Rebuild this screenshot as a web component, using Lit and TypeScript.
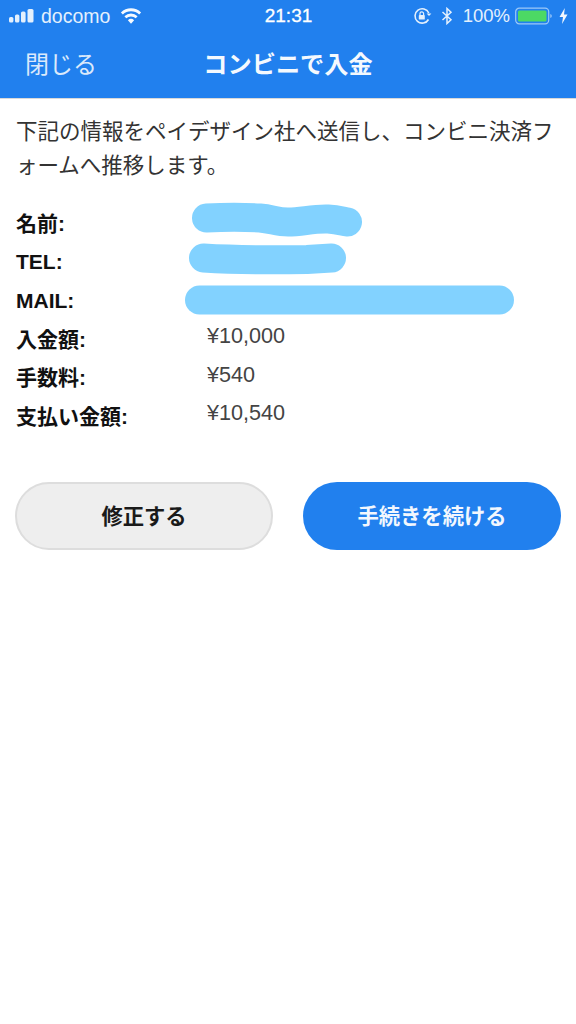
import { LitElement, html, css, svg } from "lit";
import { customElement } from "lit/decorators.js";

@customElement("app-root")
export class AppRoot extends LitElement {
  static styles = css`
    :host { display: block; width: 576px; height: 1024px; background: #fff; font-family: "Liberation Sans", "Noto Sans CJK JP", sans-serif; overflow: hidden; }
    .head { background: #2180ee; height: 98px; color: #fff; border-bottom: 1px solid #d9d9d9; box-sizing: content-box; }
    .status { height: 32px; display: grid; grid-template-columns: 1fr auto 1fr; align-items: center; padding: 0 8px 0 9px; font-size: 18.5px; color: #e4f0fd; }
    .sl, .sr { display: flex; align-items: center; }
    .sl { gap: 6px; }
    .sr { justify-content: flex-end; }
    .carrier { font-size: 19.5px; }
    .wifi { margin-left: 4px; }
    .bt { margin-left: 9px; }
    .pct { margin-left: 10px; }
    .batt { margin-left: 5px; }
    .bolt { margin-left: 6px; }
    .time { font-size: 19px; color: #fff; letter-spacing: 0; -webkit-text-stroke: .3px #fff; }
    .nav { height: 60px; display: grid; grid-template-columns: 1fr auto 1fr; align-items: center; padding: 0 25px 8px 25px; }
    .close { font-size: 24px; font-family: "Noto Sans CJK JP", sans-serif; color: #dbe9fb; letter-spacing: 0; font-weight: 400; }
    .title { font-size: 24.2px; font-weight: 700; font-family: "Noto Sans CJK JP", sans-serif; color: #f4f9fe; }
    .intro { margin: 0; padding: 14px 16px 0 16px; font-size: 21.5px; line-height: 33.5px; color: #333; font-family: "Noto Sans CJK JP", sans-serif; line-break: anywhere; }
    .rows { display: grid; grid-template-columns: 191px 1fr; grid-auto-rows: 38.6px; padding: 23px 0 0 16px; }
    .label { font-weight: 700; font-size: 21px; line-height: 24px; color: #111; align-self: center; padding-top: 3px; }
    .value { position: relative; font-size: 21.6px; color: #444; align-self: center; }
    .amount { padding-bottom: 4px; }
    .mask { position: absolute; left: -20px; top: -20px; overflow: visible; }
    .btns { display: grid; grid-template-columns: 1fr 1fr; gap: 30px; padding: 47px 15px 0 15px; }
    .btn { height: 68px; border-radius: 34px; box-sizing: border-box; display: flex; align-items: center; justify-content: center; padding-bottom: 3px; font-size: 21.3px; font-weight: 700; font-family: "Noto Sans CJK JP", sans-serif; }
    .ghost { background: #eeeeee; border: 2px solid #dddddd; color: #1a1a1a; }
    .main { background: #2180ee; color: #f2f7fe; }
  `;

  mask(d: string, w: number) {
    return html`<svg class="mask" width="${w}" height="60" viewBox="0 0 ${w} 60" aria-hidden="true">${svg`<path d="${d}" fill="none" stroke="#82d2ff" stroke-width="29" stroke-linecap="round" stroke-linejoin="round"/>`}</svg>`;
  }

  render() {
    const masks: [string, unknown][] = [
      ["名前:", this.mask("M19.5 16 C40 15 55 15 73 16 C85 17 90 20 101 20 C115 20 125 16.5 141 17 C150 17.5 155 19 160.5 20", 200)],
      ["TEL:", this.mask("M16.5 17 C50 19 90 19 120 18.4 L144.5 17", 170)],
      ["MAIL:", this.mask("M12.5 21 L312.5 21", 340)],
    ];
    const amounts = [
      ["入金額:", "¥10,000"],
      ["手数料:", "¥540"],
      ["支払い金額:", "¥10,540"],
    ];
    return html`
      <div class="head">
        <div class="status">
          <div class="sl">
            <svg width="26" height="16" viewBox="0 0 26 16" fill="#e4f0fd"><rect x="0" y="9" width="4.4" height="5.5" rx="1.6"/><rect x="6" y="6.5" width="4.4" height="8" rx="1.6"/><rect x="12" y="3.5" width="4.6" height="11" rx="1.6"/><rect x="18.5" y="1" width="6" height="13.5" rx="1.6"/></svg>
            <span class="carrier">docomo</span>
            <svg class="wifi" width="22" height="17" viewBox="0 0 24 18" fill="#f6faff"><path d="M12 17 L8.6 13 A5 5 0 0 1 15.4 13 Z"/><path d="M6.8 11 L4.8 8.7 A10.5 10.5 0 0 1 19.2 8.7 L17.2 11 A7.5 7.5 0 0 0 6.8 11 Z"/><path d="M3.1 6.9 L1 4.5 A16 16 0 0 1 23 4.5 L20.9 6.9 A13 13 0 0 0 3.1 6.9 Z"/></svg>
          </div>
          <div class="time">21:31</div>
          <div class="sr">
            <svg width="19" height="18" viewBox="0 0 19 18" fill="none" stroke="#e4f0fd" stroke-width="1.6"><path d="M15.5 12.5 A7.2 7.2 0 1 1 15.8 6"/><path d="M16 9 l-2.4 -2.6 h4.8 z" fill="#e4f0fd" stroke="none"/><rect x="5.8" y="8" width="6" height="4.6" rx=".7" fill="#e4f0fd" stroke="none"/><path d="M7 8 V6.6 a1.8 1.8 0 0 1 3.6 0 V8" stroke-width="1.2"/></svg>
            <svg class="bt" width="12" height="18" viewBox="0 0 11 18" fill="none" stroke="#e4f0fd" stroke-width="1.5"><path d="M1 5 L9.5 12.8 L5.5 16.5 V1.5 L9.5 5.2 L1 13"/></svg>
            <span class="pct">100%</span>
            <svg class="batt" width="38" height="18" viewBox="0 0 38 18"><rect x=".7" y="1.2" width="33" height="15.6" rx="3.6" fill="none" stroke="#9cc8f8" stroke-width="1.2"/><rect x="3" y="3.4" width="28.5" height="11.2" rx="1.6" fill="#4cd964"/><path d="M35.5 7 a2.4 2.4 0 0 1 0 4 z" fill="#cfe3fb"/></svg>
            <svg class="bolt" width="9" height="16" viewBox="0 0 9 16" fill="#f1f7fe"><path d="M5.8 0 L.5 9 H4 L3 16 L8.5 6.5 H5 Z"/></svg>
          </div>
        </div>
        <div class="nav">
          <div class="close">閉じる</div>
          <div class="title">コンビニで入金</div>
          <div></div>
        </div>
      </div>
      <p class="intro">下記の情報をペイデザイン社へ送信し、コンビニ決済フォームへ推移します。</p>
      <div class="rows">
        ${masks.map(([l, v]) => html`<div class="label">${l}</div><div class="value">${v}</div>`)}
        ${amounts.map(([l, v]) => html`<div class="label">${l}</div><div class="value amount">${v}</div>`)}
      </div>
      <div class="btns">
        <div class="btn ghost">修正する</div>
        <div class="btn main">手続きを続ける</div>
      </div>
    `;
  }
}
